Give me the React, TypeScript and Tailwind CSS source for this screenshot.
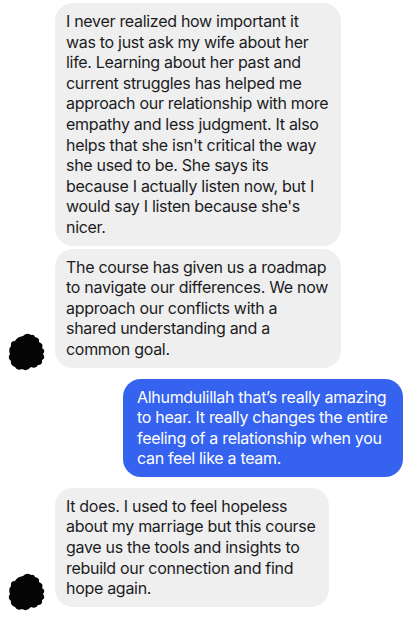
const first = [
  "I never realized how important it",
  "was to just ask my wife about her",
  "life. Learning about her past and",
  "current struggles has helped me",
  "approach our relationship with more",
  "empathy and less judgment. It also",
  "helps that she isn't critical the way",
  "she used to be. She says its",
  "because I actually listen now, but I",
  "would say I listen because she's",
  "nicer.",
];

const second = [
  "The course has given us a roadmap",
  "to navigate our differences. We now",
  "approach our conflicts with a",
  "shared understanding and a",
  "common goal.",
];

const mine = [
  "Alhumdulillah that\u2019s really amazing",
  "to hear. It really changes the entire",
  "feeling of a relationship when you",
  "can feel like a team.",
];

const last = [
  "It does. I used to feel hopeless",
  "about my marriage but this course",
  "gave us the tools and insights to",
  "rebuild our connection and find",
  "hope again.",
];

function Lines({ lines }: { lines: string[] }) {
  return (
    <>
      {lines.map((l, i) => (
        <span key={i} className="block whitespace-nowrap">
          {l}
        </span>
      ))}
    </>
  );
}

// scribbled-out profile picture
function Blob() {
  return (
    <svg width="40" height="40" viewBox="0 0 40 40" className="block">
      <path
        d="M16 4 Q20 0 24 3 Q27 2 28 5 Q33 6 32 10 Q37 12 35 16 Q39 18 36 22 Q39 26 35 28 Q36 33 31 33 Q29 37 24 35 Q20 40 15 37 Q10 39 8 35 Q3 33 4 29 Q0 26 3 22 Q1 17 4 14 Q3 9 8 9 Q10 5 16 4 Z"
        fill="#050505"
      />
    </svg>
  );
}

export default function App() {
  return (
    <div
      className="h-[640px] w-[410px] overflow-hidden bg-white text-[16px] leading-[20.6px] tracking-[-0.3px] text-[#1c1c1e]"
      style={{ fontFamily: "Inter, 'Noto Sans', sans-serif" }}
    >
      <div className="flex flex-col pt-[3px]">
        <div className="ml-[55px] w-[286px] rounded-[18px] bg-[#efeff0] px-[11px] py-2">
          <Lines lines={first} />
        </div>

        <div className="mt-[3px] flex items-end">
          <div className="w-[55px] pl-[7px] translate-y-[4px]">
            <Blob />
          </div>
          <div className="w-[286px] rounded-[18px] bg-[#efeff0] px-[11px] py-2">
            <Lines lines={second} />
          </div>
        </div>

        <div className="mt-[11px] flex justify-end pr-[7px]">
          <div className="w-[280px] rounded-[18px] bg-[#3563f0] px-[14px] py-2 text-white">
            <Lines lines={mine} />
          </div>
        </div>

        <div className="mt-[11px] flex items-end">
          <div className="w-[55px] pl-[7px] translate-y-[5px]">
            <Blob />
          </div>
          <div className="w-[274px] rounded-[18px] bg-[#efeff0] px-[11px] py-2">
            <Lines lines={last} />
          </div>
        </div>
      </div>
    </div>
  );
}
